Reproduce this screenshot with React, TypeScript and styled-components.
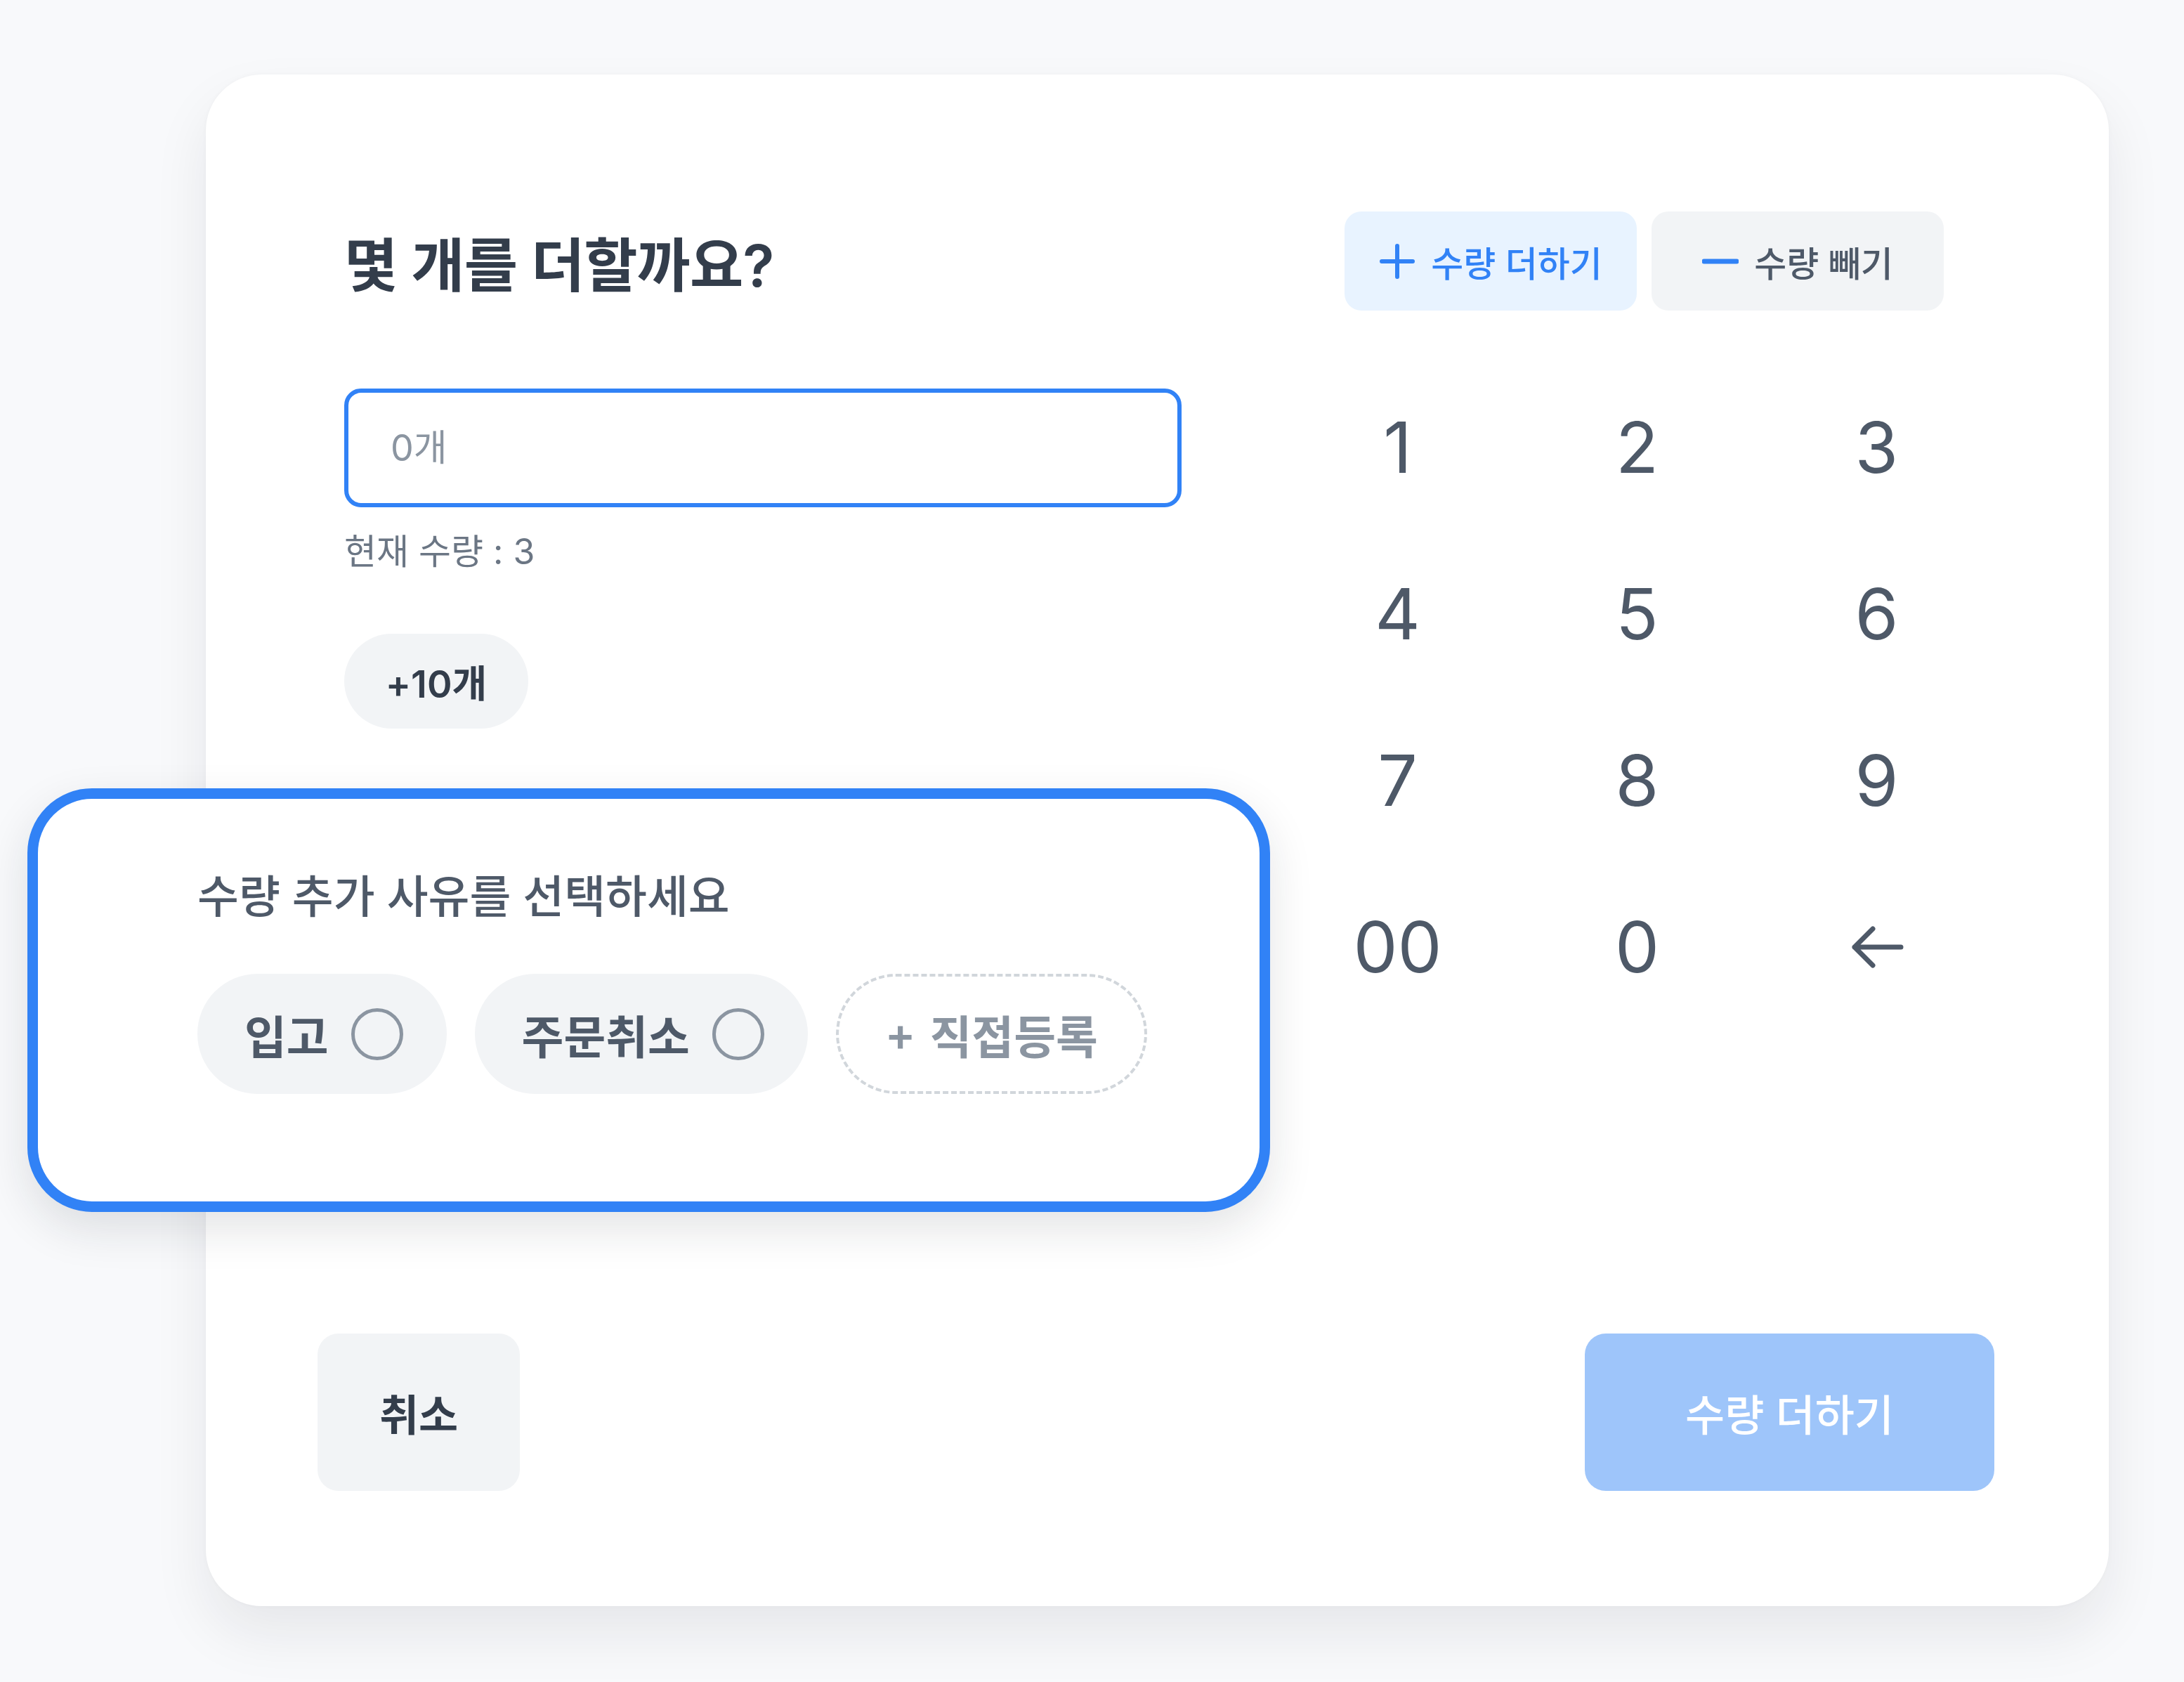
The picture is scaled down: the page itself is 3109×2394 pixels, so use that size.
import React, { useState } from "react";
import styled, { createGlobalStyle } from "styled-components";

const colors = {
  blue: "#3182f6",
  blueLight: "#e8f3ff",
  blueDisabled: "#9ec5fa",
  grey50: "#f2f4f6",
  grey300: "#d1d6db",
  grey500: "#8b95a1",
  grey600: "#6b7684",
  grey700: "#4e5968",
  grey800: "#333d4b",
};

const GlobalStyle = createGlobalStyle`
  html, body {
    margin: 0;
    padding: 0;
    background: #f8f9fb;
  }
  body {
    font-family: Inter, "Noto Sans CJK KR", sans-serif;
  }
  button, input {
    font-family: inherit;
  }
`;

const Page = styled.div`
  width: 3109px;
  height: 2394px;
  box-sizing: border-box;
  padding: 106px 0 0 293px;
`;

const Card = styled.div`
  position: relative;
  width: 2709px;
  height: 2180px;
  box-sizing: border-box;
  display: flex;
  flex-direction: column;
  background: white;
  border-radius: 80px;
  box-shadow: 0 40px 80px rgba(25, 31, 40, 0.08), 0 0 6px rgba(0, 0, 0, 0.03);
`;

const Body = styled.div`
  display: grid;
  grid-template-columns: 1192px 1023px;
  column-gap: 137px;
  padding: 195px 160px 0 197px;
`;

const Column = styled.div`
  display: flex;
  flex-direction: column;
`;

const TitleRow = styled.div`
  height: 141px;
  display: flex;
  align-items: center;
`;

const Title = styled.h1`
  margin: 0;
  font-size: 83px;
  font-weight: 600;
  color: ${colors.grey800};
  letter-spacing: -1px;
`;

const AmountInput = styled.input`
  margin-top: 111px;
  height: 169px;
  box-sizing: border-box;
  border: 6px solid ${colors.blue};
  border-radius: 24px;
  padding: 0 60px;
  font-size: 52px;
  color: ${colors.grey800};
  outline: none;
  &::placeholder {
    color: ${colors.grey500};
  }
`;

const Helper = styled.div`
  margin-top: 30px;
  font-size: 50px;
  line-height: 67px;
  color: ${colors.grey600};
`;

const QuickPill = styled.button`
  margin-top: 83px;
  align-self: flex-start;
  width: 262px;
  height: 135px;
  border: 0;
  border-radius: 68px;
  background: ${colors.grey50};
  font-size: 54px;
  font-weight: 600;
  color: ${colors.grey800};
`;

const ModeRow = styled.div`
  height: 141px;
  display: flex;
  gap: 21px;
  padding-left: 95px;
`;

const ModeButton = styled.button<{ $active?: boolean }>`
  width: 416px;
  height: 141px;
  border: 0;
  border-radius: 24px;
  display: flex;
  align-items: center;
  justify-content: center;
  gap: 22px;
  background: ${(p) => (p.$active ? colors.blueLight : colors.grey50)};
  color: ${(p) => (p.$active ? colors.blue : colors.grey700)};
  font-size: 50px;
  font-weight: 500;
`;

const Keypad = styled.div`
  margin-top: 76px;
  display: grid;
  grid-template-columns: repeat(3, 341px);
  grid-auto-rows: 237px;
`;

const Key = styled.button`
  border: 0;
  background: none;
  display: flex;
  align-items: center;
  justify-content: center;
  font-size: 100px;
  font-weight: 400;
  color: ${colors.grey700};
`;

const Footer = styled.div`
  margin-top: auto;
  display: flex;
  justify-content: space-between;
  padding: 0 163px 164px 159px;
`;

const FooterButton = styled.button<{ $primary?: boolean }>`
  width: ${(p) => (p.$primary ? "583px" : "288px")};
  height: 224px;
  border: 0;
  border-radius: 30px;
  background: ${(p) => (p.$primary ? colors.blueDisabled : colors.grey50)};
  color: ${(p) => (p.$primary ? "white" : colors.grey800)};
  font-size: 61px;
  font-weight: ${(p) => (p.$primary ? 500 : 600)};
`;

const Popover = styled.div`
  position: absolute;
  left: -254px;
  top: 1016px;
  width: 1769px;
  height: 603px;
  box-sizing: border-box;
  border: 15px solid ${colors.blue};
  border-radius: 92px;
  background: white;
  box-shadow: 0 24px 64px rgba(25, 31, 40, 0.12);
  padding: 98px 0 0 227px;
`;

const PopoverTitle = styled.p`
  margin: 0;
  font-size: 64px;
  line-height: 81px;
  font-weight: 500;
  color: ${colors.grey700};
`;

const ChipRow = styled.div`
  margin-top: 70px;
  display: flex;
  gap: 40px;
`;

const Chip = styled.button<{ $dashed?: boolean }>`
  height: 171px;
  box-sizing: border-box;
  display: flex;
  align-items: center;
  gap: ${(p) => (p.$dashed ? "20px" : "32px")};
  padding: ${(p) => (p.$dashed ? "0 66px" : "0 62px 0 67px")};
  border-radius: 86px;
  border: ${(p) => (p.$dashed ? `4px dashed ${colors.grey300}` : "0")};
  background: ${(p) => (p.$dashed ? "transparent" : colors.grey50)};
  color: ${(p) => (p.$dashed ? colors.grey500 : colors.grey700)};
  font-size: 65px;
  font-weight: 600;
`;

const Radio = styled.span`
  width: 74px;
  height: 74px;
  box-sizing: border-box;
  border-radius: 50%;
  border: 5px solid ${colors.grey500};
`;

const PlusIcon = () => (
  <svg width="52" height="52" viewBox="0 0 52 52" fill="none">
    <path d="M26 4v44M4 26h44" stroke={colors.blue} strokeWidth="6" strokeLinecap="round" />
  </svg>
);

const MinusIcon = () => (
  <svg width="52" height="52" viewBox="0 0 52 52" fill="none">
    <path d="M3 26h46" stroke={colors.blue} strokeWidth="7" strokeLinecap="round" />
  </svg>
);

const BackIcon = () => (
  <svg width="76" height="64" viewBox="0 0 76 64" fill="none">
    <path
      d="M72 32H6M32 6L6 32l26 26"
      stroke={colors.grey700}
      strokeWidth="7"
      strokeLinecap="round"
      strokeLinejoin="round"
    />
  </svg>
);

const keys = ["1", "2", "3", "4", "5", "6", "7", "8", "9", "00", "0", "back"];

const App: React.FC = () => {
  const [mode, setMode] = useState<"add" | "sub">("add");

  return (
    <Page>
      <GlobalStyle />
      <Card>
        <Body>
          <Column>
            <TitleRow>
              <Title>몇 개를 더할까요?</Title>
            </TitleRow>
            <AmountInput placeholder="0개" readOnly />
            <Helper>현재 수량 : 3</Helper>
            <QuickPill>+10개</QuickPill>
          </Column>
          <Column>
            <ModeRow>
              <ModeButton $active={mode === "add"} onClick={() => setMode("add")}>
                <PlusIcon />
                수량 더하기
              </ModeButton>
              <ModeButton $active={mode === "sub"} onClick={() => setMode("sub")}>
                <MinusIcon />
                수량 빼기
              </ModeButton>
            </ModeRow>
            <Keypad>
              {keys.map((k) => (
                <Key key={k}>{k === "back" ? <BackIcon /> : k}</Key>
              ))}
            </Keypad>
          </Column>
        </Body>
        <Footer>
          <FooterButton>취소</FooterButton>
          <FooterButton $primary>수량 더하기</FooterButton>
        </Footer>
        <Popover>
          <PopoverTitle>수량 추가 사유를 선택하세요</PopoverTitle>
          <ChipRow>
            <Chip>
              입고
              <Radio />
            </Chip>
            <Chip>
              주문취소
              <Radio />
            </Chip>
            <Chip $dashed>
              <span>+</span>
              직접등록
            </Chip>
          </ChipRow>
        </Popover>
      </Card>
    </Page>
  );
};

export default App;
